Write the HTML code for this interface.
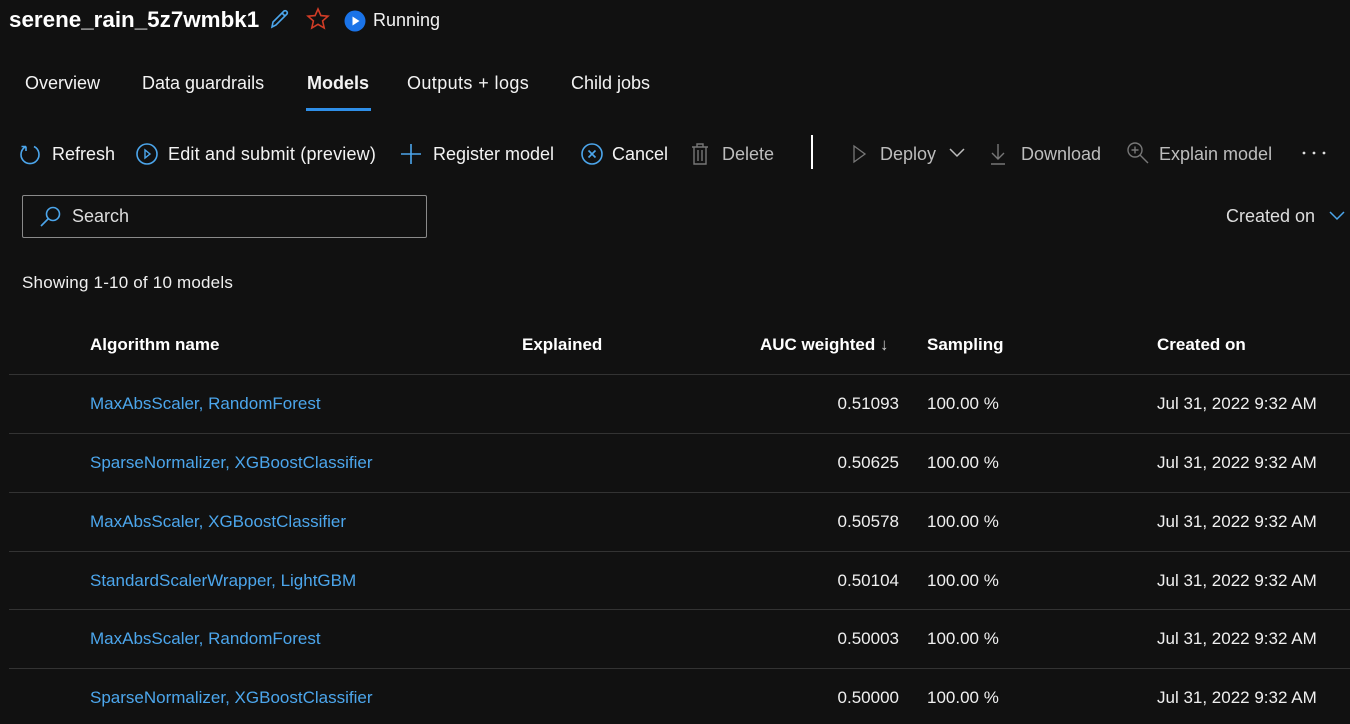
<!DOCTYPE html>
<html><head><style>
body{margin:0;width:1350px;height:724px;background:#111111;color:#fff;font-family:"Liberation Sans",sans-serif;overflow:hidden;position:relative}
.a{position:absolute;white-space:nowrap}
.t{font-size:18px;color:#f3f3f3}
.g{color:#bdbdbd}
.h{font-size:17px;font-weight:bold;color:#fff}
.c{font-size:17px;color:#f0f0f0}
.l{font-size:17px;color:#4ca6ec}
.sep{position:absolute;left:9px;width:1341px;height:1px;background:#333}
svg{position:absolute}
</style></head><body>
<div class="a" style="left:9px;top:7px;font-size:22.4px;font-weight:bold">serene_rain_5z7wmbk1</div>
<svg style="left:268px;top:7px" width="24" height="24" viewBox="0 0 24 24"><path d="M4 20l1-5L16 4a2.2 2.2 0 013 3L8 18z M14 6l3 3" fill="none" stroke="#4ca6ec" stroke-width="1.6"/></svg>
<svg style="left:306px;top:7px" width="24" height="24" viewBox="0 0 24 24"><path d="M12 2l2.9 6.6 7.1.6-5.4 4.7 1.6 7.1L12 17.3 5.8 21l1.6-7.1L2 9.2l7.1-.6z" fill="none" stroke="#d13c26" stroke-width="1.6"/></svg>
<svg style="left:344px;top:10px" width="22" height="22" viewBox="0 0 22 22"><circle cx="11" cy="11" r="10.5" fill="#1a73e8"/><path d="M8.5 6.5v9l7-4.5z" fill="#fff"/></svg>
<div class="a t" style="left:373px;top:10px">Running</div>

<div class="a t" style="left:25px;top:73px">Overview</div>
<div class="a t" style="left:142px;top:73px">Data guardrails</div>
<div class="a t" style="left:307px;top:73px;font-weight:bold">Models</div>
<div style="position:absolute;left:306px;top:108px;width:65px;height:3px;background:#2f8fe8"></div>
<div class="a t" style="left:407px;top:73px;letter-spacing:0.4px">Outputs + logs</div>
<div class="a t" style="left:571px;top:73px">Child jobs</div>

<svg style="left:18px;top:142px" width="24" height="24" viewBox="0 0 24 24"><path d="M8 4.5A9 9 0 1016 4.5 M8 4.5V9 M8 4.5H3.5" fill="none" stroke="#4ca6ec" stroke-width="1.6"/></svg>
<div class="a t" style="left:52px;top:144px">Refresh</div>
<svg style="left:135px;top:142px" width="24" height="24" viewBox="0 0 24 24"><circle cx="12" cy="12" r="10" fill="none" stroke="#4ca6ec" stroke-width="1.6"/><path d="M10 8v8l5-4z" fill="none" stroke="#4ca6ec" stroke-width="1.4"/></svg>
<div class="a t" style="left:168px;top:144px;letter-spacing:0.2px">Edit and submit (preview)</div>
<svg style="left:399px;top:142px" width="24" height="24" viewBox="0 0 24 24"><path d="M12 2v20M2 12h20" stroke="#4ca6ec" stroke-width="1.6"/></svg>
<div class="a t" style="left:433px;top:144px">Register model</div>
<svg style="left:580px;top:142px" width="24" height="24" viewBox="0 0 24 24"><circle cx="12" cy="12" r="10" fill="none" stroke="#4ca6ec" stroke-width="1.6"/><path d="M8.5 8.5l7 7M15.5 8.5l-7 7" stroke="#4ca6ec" stroke-width="1.6"/></svg>
<div class="a t" style="left:612px;top:144px">Cancel</div>
<svg style="left:689px;top:142px" width="22" height="24" viewBox="0 0 22 24"><path d="M3 5h16M8 5V2h6v3M5 5v17h12V5M9 8v11M13 8v11" fill="none" stroke="#777" stroke-width="1.4"/></svg>
<div class="a t g" style="left:722px;top:144px">Delete</div>
<div style="position:absolute;left:811px;top:135px;width:2px;height:34px;background:#fff"></div>
<svg style="left:850px;top:143px" width="20" height="22" viewBox="0 0 20 22"><path d="M4 3v16l11-8z" fill="none" stroke="#777" stroke-width="1.3"/></svg>
<div class="a t g" style="left:880px;top:144px">Deploy</div>
<svg style="left:948px;top:146px" width="18" height="14" viewBox="0 0 18 14"><path d="M2 3l7 7 7-7" fill="none" stroke="#bdbdbd" stroke-width="1.5"/></svg>
<svg style="left:988px;top:141px" width="20" height="26" viewBox="0 0 20 26"><path d="M10 3v15M4 12l6 6 6-6M3 23h14" fill="none" stroke="#777" stroke-width="1.4"/></svg>
<div class="a t g" style="left:1021px;top:144px">Download</div>
<svg style="left:1125px;top:140px" width="26" height="26" viewBox="0 0 26 26"><circle cx="10" cy="10" r="7" fill="none" stroke="#777" stroke-width="1.4"/><path d="M15 15l8 8M10 6.5v7M6.5 10h7" stroke="#777" stroke-width="1.4"/></svg>
<div class="a t g" style="left:1159px;top:144px">Explain model</div>
<svg style="left:1300px;top:148px" width="28" height="10" viewBox="0 0 28 10"><circle cx="4" cy="5" r="1.4" fill="#ddd"/><circle cx="14" cy="5" r="1.4" fill="#ddd"/><circle cx="24" cy="5" r="1.4" fill="#ddd"/></svg>

<div style="position:absolute;left:22px;top:195px;width:403px;height:41px;border:1px solid #8a8a8a;border-radius:2px"></div>
<svg style="left:38px;top:205px" width="26" height="24" viewBox="0 0 26 24"><circle cx="15" cy="9" r="6.5" fill="none" stroke="#4ca6ec" stroke-width="1.6"/><path d="M10.5 13.5L3 21" stroke="#4ca6ec" stroke-width="1.6"/></svg>
<div class="a" style="left:72px;top:206px;font-size:18px;color:#ddd">Search</div>
<div class="a" style="left:1226px;top:206px;font-size:18px;color:#ddd">Created on</div>
<svg style="left:1328px;top:209px" width="18" height="14" viewBox="0 0 18 14"><path d="M2 3l7 7 7-7" fill="none" stroke="#4ca6ec" stroke-width="1.5"/></svg>

<div class="a" style="left:22px;top:273px;font-size:17px;color:#f0f0f0;letter-spacing:0.2px">Showing 1-10 of 10 models</div>

<div class="a h" style="left:90px;top:335px">Algorithm name</div>
<div class="a h" style="left:522px;top:335px">Explained</div>
<div class="a h" style="left:760px;top:335px">AUC weighted <span style="font-weight:normal;color:#ccc">↓</span></div>
<div class="a h" style="left:927px;top:335px">Sampling</div>
<div class="a h" style="left:1157px;top:335px">Created on</div>

<div class="sep" style="top:374px"></div>
<div class="sep" style="top:433px"></div>
<div class="sep" style="top:492px"></div>
<div class="sep" style="top:551px"></div>
<div class="sep" style="top:609px"></div>
<div class="sep" style="top:668px"></div>

<div class="a l" style="left:90px;top:394px">MaxAbsScaler, RandomForest</div>
<div class="a c" style="right:451px;top:394px">0.51093</div>
<div class="a c" style="left:927px;top:394px">100.00 %</div>
<div class="a c" style="left:1157px;top:394px">Jul 31, 2022 9:32 AM</div>

<div class="a l" style="left:90px;top:453px">SparseNormalizer, XGBoostClassifier</div>
<div class="a c" style="right:451px;top:453px">0.50625</div>
<div class="a c" style="left:927px;top:453px">100.00 %</div>
<div class="a c" style="left:1157px;top:453px">Jul 31, 2022 9:32 AM</div>

<div class="a l" style="left:90px;top:512px">MaxAbsScaler, XGBoostClassifier</div>
<div class="a c" style="right:451px;top:512px">0.50578</div>
<div class="a c" style="left:927px;top:512px">100.00 %</div>
<div class="a c" style="left:1157px;top:512px">Jul 31, 2022 9:32 AM</div>

<div class="a l" style="left:90px;top:571px">StandardScalerWrapper, LightGBM</div>
<div class="a c" style="right:451px;top:571px">0.50104</div>
<div class="a c" style="left:927px;top:571px">100.00 %</div>
<div class="a c" style="left:1157px;top:571px">Jul 31, 2022 9:32 AM</div>

<div class="a l" style="left:90px;top:629px">MaxAbsScaler, RandomForest</div>
<div class="a c" style="right:451px;top:629px">0.50003</div>
<div class="a c" style="left:927px;top:629px">100.00 %</div>
<div class="a c" style="left:1157px;top:629px">Jul 31, 2022 9:32 AM</div>

<div class="a l" style="left:90px;top:688px">SparseNormalizer, XGBoostClassifier</div>
<div class="a c" style="right:451px;top:688px">0.50000</div>
<div class="a c" style="left:927px;top:688px">100.00 %</div>
<div class="a c" style="left:1157px;top:688px">Jul 31, 2022 9:32 AM</div>
</body></html>
